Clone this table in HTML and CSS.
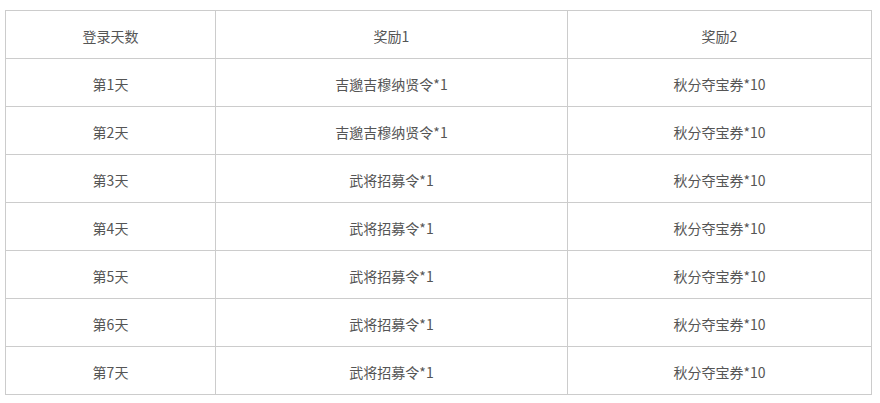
FILE: index.html
```html
<!DOCTYPE html>
<html>
<head>
<meta charset="utf-8">
<link rel="stylesheet" href="styles.css">
</head>
<body>
<table class="rewards">
  <colgroup>
    <col class="c1"><col class="c2"><col class="c3">
  </colgroup>
  <tr><td>登录天数</td><td>奖励1</td><td>奖励2</td></tr>
  <tr><td>第1天</td><td>吉邈吉穆纳贤令*1</td><td>秋分夺宝券*10</td></tr>
  <tr><td>第2天</td><td>吉邈吉穆纳贤令*1</td><td>秋分夺宝券*10</td></tr>
  <tr><td>第3天</td><td>武将招募令*1</td><td>秋分夺宝券*10</td></tr>
  <tr><td>第4天</td><td>武将招募令*1</td><td>秋分夺宝券*10</td></tr>
  <tr><td>第5天</td><td>武将招募令*1</td><td>秋分夺宝券*10</td></tr>
  <tr><td>第6天</td><td>武将招募令*1</td><td>秋分夺宝券*10</td></tr>
  <tr><td>第7天</td><td>武将招募令*1</td><td>秋分夺宝券*10</td></tr>
</table>
</body>
</html>
```
FILE: styles.css
```css
html, body {
  margin: 0;
  padding: 0;
  background: #fff;
}
body {
  padding: 10px 0 0 5px;
  font-family: "Noto Sans CJK SC", "Noto Sans", sans-serif;
  font-size: 14px;
  color: #555;
}
.rewards {
  border-collapse: collapse;
  table-layout: fixed;
  width: 866px;
}
.c1 { width: 210px; }
.c2 { width: 352px; }
.c3 { width: 304px; }
.rewards td {
  border: 1px solid #ccc;
  height: 48px;
  padding: 3px 0 0 0;
  box-sizing: border-box;
  text-align: center;
  vertical-align: middle;
  line-height: 20px;
}
```
